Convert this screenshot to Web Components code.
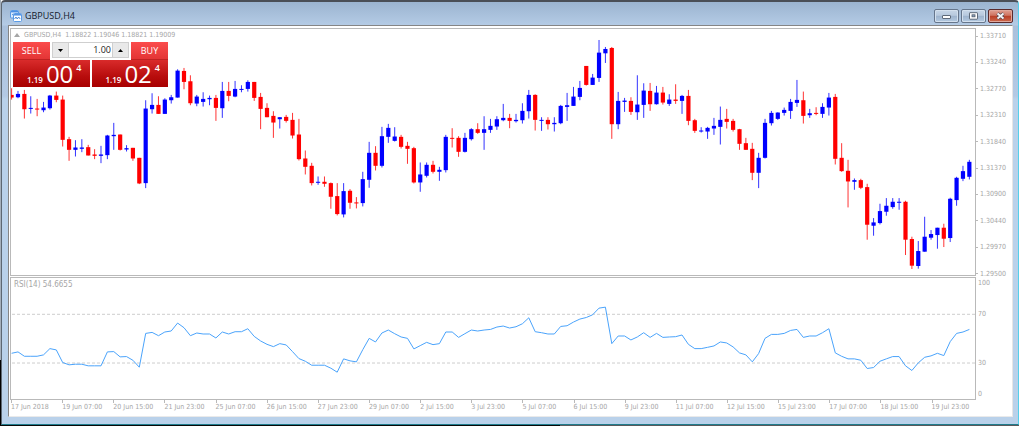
<!DOCTYPE html>
<html lang="en">
<head>
<meta charset="utf-8">
<title>GBPUSD,H4</title>
<style>
  html, body { margin: 0; height: 100%; background: #fff; }
  body { font-family: "DejaVu Sans Condensed", "DejaVu Sans", sans-serif; color: #a6a6a6; }
</style>
</head>
<body>
<mdi-window caption="GBPUSD,H4">
  <chart-view></chart-view>
</mdi-window>

<script>
// Candles: [up, high, body top, body bottom, low], in thirds of a unit below each run's base.
const RUNS = [
  [85, [
    [0,10,30,38,44],[1,18,27,37,40],[0,15,27,73,101],[1,34,69,72,86],[0,42,71,74,94],[1,51,68,76,82],
    [1,30,32,70,74],[0,20,32,45,52],[0,32,44,165,185],[0,156,163,195,228],[1,166,188,195,215],
    [1,163,188,192,202],[0,180,187,212,212],[0,193,209,213,223],[1,183,209,213,235],[1,150,152,211,223],
    [1,114,150,154,195],[0,149,149,195,197],[1,181,190,194,200],[0,189,189,221,228],[0,219,219,296,298],
    [1,46,71,295,310],[1,25,60,73,86],[0,34,60,87,87],[1,40,44,87,87],[1,30,37,46,56],[1,-47,-43,38,38]]],
  [60, [
    [0,24,33,66,88],[0,46,64,130,136],[1,105,110,131,139],[1,97,117,126,140],[1,107,114,118,136],
    [0,105,114,144,183],[1,66,93,145,174],[0,66,93,108,124],[1,63,87,110,112],[1,76,87,90,97],
    [1,61,66,87,95],[0,66,66,114,123],[0,99,111,147,208],[0,130,144,172,172],[0,154,168,188,234],
    [1,172,172,178,206],[0,165,171,183,188],[0,159,180,227,236],[0,177,224,298,302],[0,272,296,321,344],
    [0,309,318,370,377],[1,350,366,369,375],[0,350,366,372,381],[0,368,370,411,447],[0,370,409,463,467],
    [1,370,394,464,473],[0,388,393,429,447],[0,412,428,431,446]]],
  [80, [
    [1,276,298,370,380],[1,186,219,300,324],[0,199,219,258,272],[1,141,169,258,263],[1,132,144,171,189],
    [1,142,170,183,185],[0,165,171,201,206],[0,186,198,207,252],[0,201,205,308,311],[1,248,284,308,336],
    [1,248,255,288,293],[0,243,255,276,281],[1,261,270,276,303],[1,165,171,271,278],[0,145,174,177,203],
    [0,169,174,216,231],[1,159,174,216,218],[1,145,148,178,182],[0,130,148,159,162],[1,109,148,159,210],
    [1,117,138,150,159],[1,109,118,140,150],[1,72,114,121,124],[0,102,114,123,145],[1,102,120,124,128],
    [1,70,93,121,131],[1,30,45,94,116],[0,43,45,120,152]]],
  [30, [
    [1,262,270,273,303],[0,262,270,283,299],[1,262,279,283,305],[1,225,228,280,283],
    [1,189,226,231,273],[1,171,200,228,228],[1,153,174,201,211],[0,108,108,165,167],[1,132,143,165,165],
    [1,30,68,144,156],[1,51,57,70,99],[0,51,54,283,327],[1,186,213,283,298],[1,204,212,216,246],
    [0,202,213,246,255],[1,136,224,247,270],[1,160,182,225,264],[0,159,183,223,243],[1,168,188,223,224],
    [0,171,188,218,224],[1,193,209,222,228],[0,163,209,213,222],[1,195,198,213,252],[0,180,198,273,286],
    [0,267,271,303,309],[1,292,302,305,308]]],
  [70, [
    [1,171,174,185,207],[1,144,168,176,195],[1,110,150,171,224],[0,117,147,156,176],[0,147,153,180,185],
    [0,177,178,222,240],[0,204,220,240,240],[0,219,237,309,331],[1,249,264,309,355],[1,147,159,264,266],
    [1,123,129,160,167],[1,127,128,147,150],[1,113,120,129,137],[1,87,96,123,147],[1,30,90,99,111],
    [0,65,91,138,161],[1,117,130,136,144],[0,112,129,132,136],[1,100,111,132,144],[1,69,83,113,137],
    [0,72,81,267,284],[0,220,264,304,306]]],
  [140, [
    [0,60,93,125,203],[1,116,121,126,150],[0,117,121,144,148],[0,132,142,255,300],[1,235,248,258,288],
    [1,192,214,250,254],[1,175,198,216,228],[1,175,186,202,207],[1,175,186,189,210],[0,183,186,300,346],
    [0,291,298,378,388],[1,304,334,379,387],[1,231,291,336,336],[1,271,283,294,300],[1,264,264,286,327],
    [0,252,264,297,322],[1,174,177,295,307],[1,111,114,181,198],[1,78,94,117,124],[1,60,66,111,119]]]
];
const RSI = [
  [270, [251,247,260,260,260,256,237,241,279,286,284,284,289,289,289,247,246,262,261,272,293,191,188,198,187,
    184,160,174,198,190,193,193,205,187,193,186,186,177,200]],
  [290, [154,164,171,162,166,186,207,215,227,227,227,236,248,208,214,217,180,146,157,130,121,132,142,146,178,
    168,158,165,162,127,127,143,132,121,124,121,119,112,109,115,111,102,84,126,129,133,133,110,108,97,88,83,
    75,55,52,162,139,139,151,142,129,143,131,143,142,141,136,164,177,177,173,169,157,160,172,190,196,217]],
  [270, [252,206,194,194,191,182,179,203,199,199,189,177,250,260,268,268,272,297,294,275,268,261,261,289,303,
    280,263,259,251,258,216,191,187,179]]
];
const PRICES = ["1.33710","1.33240","1.32770","1.32310","1.31840","1.31370","1.30900","1.30440","1.29970","1.29500"];
const TIMES = ["17 Jun 2018","19 Jun 07:00","20 Jun 15:00","21 Jun 23:00","25 Jun 07:00","26 Jun 15:00","27 Jun 23:00",
  "29 Jun 07:00","2 Jul 15:00","3 Jul 23:00","5 Jul 07:00","6 Jul 15:00","9 Jul 23:00","11 Jul 07:00","12 Jul 15:00",
  "15 Jul 23:00","17 Jul 07:00","18 Jul 15:00","19 Jul 23:00"];
const barX = i => 11.6 + 6.385 * i;

function define(name, html) {
  customElements.define(name, class extends HTMLElement {
    constructor() {
      super();
      this.attachShadow({ mode: "open" }).innerHTML = typeof html === "function" ? html(this) : html;
    }
  });
}

define("mdi-window", el => `
<style>
  :host { display: flex; flex-direction: column; height: 100vh; box-sizing: border-box; padding: 0 5px 4px 0;
    background: linear-gradient(#a5b0bc 0 360px, #000 360px) 0 0 / 1px calc(100% - 4px) no-repeat; }
  .frame { flex: 1; min-height: 0; margin-left: 1px; box-sizing: border-box; display: flex; flex-direction: column;
    border: 1px solid #5d6873; border-top: 2px solid #4a4f57; border-right-color: #55cfea; border-bottom-color: #1f7c8c;
    border-radius: 4px 4px 0 0; padding: 0 5px 7px 6px;
    background: linear-gradient(#9bb4d0, #b4cbe5 23px, #a9c0dc 24px, #b3c9e4 94px, #b9d1ea 97px); }
  header { height: 23px; display: flex; align-items: center; gap: 3px; padding: 4px 0 0 2px; box-sizing: border-box;
    font: 9px/12px "Open Sans", sans-serif; color: #15202c; }
  header svg { width: 12px; height: 12px; }
  h1 { flex: 1; margin: 0; font: inherit; }
  nav { display: flex; gap: 2px; }
  button { width: 25px; height: 14px; padding: 0; box-sizing: border-box; border: 1px solid #66768c; border-radius: 2px;
    background: linear-gradient(#c8d7e8, #b7c9de 45%, #9db3cd 50%, #b4cae2); display: grid; place-items: center;
    box-shadow: inset 0 0 0 1px #d3e0ee; }
  button.close { border-color: #5a2a2c; background: linear-gradient(#e0a194, #cf7360 45%, #b93d25 50%, #cc6a4e);
    box-shadow: inset 0 0 0 1px #e0a79b; }
  button svg { width: 11px; height: 8px; }
  main { flex: 1; min-height: 0; display: flex; background: #fff; border: 1px solid #858585;
    border-right: 1px solid #e6e6e6; border-bottom-color: #eaeaea; padding: 2px 0 0 1px; }
  ::slotted(*) { flex: 1; min-width: 0; }
  .below { height: 1px; background: linear-gradient(90deg, #080808 55%, #59595c 55%); }
</style>
<div class="frame">
  <header>
    <svg viewBox="0 0 12 12" aria-hidden="true">
      <rect x=".5" y=".5" width="8" height="7.5" rx="1" fill="#d9eafd" stroke="#5a9be6"/>
      <path d="M1 1.7h7" stroke="#4b8fe2" stroke-width="1.4"/>
      <path d="M2 5l1.200-1 1 1" fill="none" stroke="#397dd0" stroke-width=".8"/>
      <rect x="3.500" y="3.500" width="8" height="8" rx="1" fill="#fff" stroke="#5a9be6"/>
      <path d="M4 4.800h7" stroke="#4b8fe2" stroke-width="1.500"/>
      <path d="M4.500 9l1.500-2 1.200 2 1.500-2 1.500 2" fill="none" stroke="#397dd0" stroke-width=".9"/>
    </svg>
    <h1>${el.getAttribute("caption")}</h1>
    <nav>
      <button aria-label="Minimize"><svg viewBox="0 0 11 8"><rect x="1.500" y="3.500" width="8" height="3" rx=".5" fill="#fff" stroke="#505c6c" stroke-width=".9"/></svg></button>
      <button aria-label="Maximize"><svg viewBox="0 0 11 8"><rect x="1.500" y=".7" width="8" height="6.500" rx=".5" fill="#fff" stroke="#505c6c" stroke-width=".9"/><rect x="4" y="2.800" width="3" height="2" fill="#8fa6c2" stroke="#505c6c" stroke-width=".8"/></svg></button>
      <button class="close" aria-label="Close"><svg viewBox="0 0 11 8"><path d="M2.500 1.500l6 5M8.500 1.500l-6 5" stroke="#4d4550" stroke-width="3.400"/><path d="M2.500 1.500l6 5M8.500 1.500l-6 5" stroke="#f4f4f6" stroke-width="2"/></svg></button>
    </nav>
  </header>
  <main><slot></slot></main>
</div>
<div class="below"></div>`);

define("candle-plot", () => {
  let i = 0, out = "";
  for (const [base, rows] of RUNS) for (const row of rows) {
    const [h, t, b, l] = row.slice(1).map(v => base + v / 3), x = barX(i++);
    out += `<g fill="${row[0] ? "#00f" : "#f00"}"><rect x="${x - .5}" y="${h}" width="1" height="${l - h}" opacity=".8"/>` +
      `<rect x="${x - 2.1}" y="${t}" width="4.200" height="${Math.max(b - t, 1)}"/></g>`;
  }
  return `<style>:host{display:block;min-height:0}svg{display:block;width:100%;height:100%}</style>
  <svg viewBox="11 29 964 246" preserveAspectRatio="none" role="img" aria-label="Candles">${out}</svg>`;
});

define("rsi-plot", () => {
  let i = 0, pts = [];
  for (const [base, ys] of RSI) for (const y of ys) pts.push(barX(i++).toFixed(1) + "," + (base + y / 3).toFixed(1));
  return `<style>:host{display:block;min-height:0}svg{display:block;width:100%;height:100%}</style>
  <svg viewBox="11 278 964 122" preserveAspectRatio="none" role="img" aria-label="RSI">
    <path d="M12 314.500H975M12 363.500H975" stroke="#cdcdcd" stroke-dasharray="3 2"/>
    <polyline points="${pts.join(" ")}" fill="none" stroke="#49a3fb" stroke-width="1"/>
  </svg>`;
});

define("price-button", el => `
<style>
  :host { display: block; flex: 1; }
  button { width: 100%; height: 27px; padding: 0 8px 0 0; border: 0; color: #fff; display: flex; justify-content: flex-end;
    align-items: baseline; gap: 3px; background: linear-gradient(#d92b2b, #b80d0d 60%, #a80000); font: 9px/27px "Open Sans", sans-serif; }
  small { font-size: 8px; font-weight: 600; }
  b { font-size: 24px; font-weight: 400; }
  sup { font-size: 9px; font-weight: 600; line-height: 9px; align-self: flex-start; margin: 3px 0 0; }
</style>
<button><small>${el.getAttribute("lead")}</small><b>${el.getAttribute("pips")}</b><sup>${el.getAttribute("point")}</sup></button>`);

define("one-click-panel", `
<style>
  :host { display: block; width: 155px; font: 9px/18px "Open Sans", sans-serif; }
  .row { display: flex; }
  .deal { flex: none; width: 37px; height: 18px; padding: 0; border: 0; color: #fff; font: inherit;
    background: linear-gradient(#fb4c4c, #e23434); box-shadow: inset 0 -1px #c02222; }
  .lots { flex: 1; min-width: 0; display: flex; height: 16px; margin: 0 2px; box-sizing: border-box; border: 1px solid #cfcfcf; }
  .lots button { flex: none; width: 15px; padding: 0; border: 0; background: #e9e9e9; display: grid; place-items: center; }
  .lots svg { width: 5px; height: 3px; }
  input { flex: 1; width: 0; min-width: 0; padding: 0 1px 0 0; border: 0; border-left: 1px solid #cfcfcf; border-right: 1px solid #cfcfcf;
    font: inherit; line-height: 14px; text-align: right; color: #222; background: #fff; }
  .prices { gap: 2px; }
</style>
<div class="row">
  <button class="deal">SELL</button>
  <div class="lots">
    <button aria-label="Less"><svg viewBox="0 0 5 3"><path d="M0 0h5L2.500 3z"/></svg></button>
    <input aria-label="Lots" value="1.00">
    <button aria-label="More"><svg viewBox="0 0 5 3"><path d="M0 3h5L2.500 0z"/></svg></button>
  </div>
  <button class="deal">BUY</button>
</div>
<div class="row prices">
  <price-button lead="1.19" pips="00" point="4"></price-button>
  <price-button lead="1.19" pips="02" point="4"></price-button>
</div>`);

define("chart-view", `
<style>
  :host { display: grid; grid-template: 247fr 123fr 15px / 1fr 36px; row-gap: 1px; font-size: 7px; line-height: 8px; }
  .pane { position: relative; display: grid; min-height: 0; border: 1px solid #b9b9b9; }
  .title { position: absolute; top: 2px; left: 3px; white-space: pre; display: flex; align-items: center; gap: 4px; }
  .title svg { width: 6px; height: 4px; }
  .rsi .title { top: 3px; font-size: 8px; }
  one-click-panel { position: absolute; left: 2px; top: 13px; }
  .price { display: flex; flex-direction: column; justify-content: space-between; padding-top: 4px; margin-bottom: -2px; }
  .price span { display: flex; align-items: center; gap: 2px; }
  .price span::before { content: ""; width: 2px; height: 1px; background: #b9b9b9; }
  .level { display: grid; grid-template-rows: 30fr 40fr 30fr; padding-left: 2px; }
  .level span { grid-column: 1; }
  .level .top { padding-top: 2px; }
  .level .mid { margin-top: -4px; }
  .level .end { grid-row: 3; align-self: end; padding-bottom: 2px; }
  .level .low { grid-row: 3; margin-top: -4px; }
  .time { grid-column: 1 / -1; margin: -1px 36px 0 1px; display: grid; grid-auto-flow: column; grid-auto-columns: 5.3%; white-space: nowrap; }
  .time span::before { content: ""; display: block; width: 1px; height: 3px; background: #b9b9b9; }
</style>
<section class="pane">
  <candle-plot></candle-plot>
  <div class="title"><svg viewBox="0 0 6 4"><path d="M0 4h6L3 0z" fill="#a6a6a6"/></svg><span>GBPUSD,H4  1.18822 1.19046 1.18821 1.19009</span></div>
  <one-click-panel></one-click-panel>
</section>
<div class="price">${PRICES.map(p => `<span>${p}</span>`).join("")}</div>
<section class="pane rsi">
  <rsi-plot></rsi-plot>
  <div class="title">RSI(14) 54.6655</div>
</section>
<div class="level"><span class="top">100</span><span class="mid">70</span><span class="low">30</span><span class="end">0</span></div>
<div class="time">${TIMES.map(t => `<span>${t}</span>`).join("")}</div>`);
</script>
</body>
</html>
